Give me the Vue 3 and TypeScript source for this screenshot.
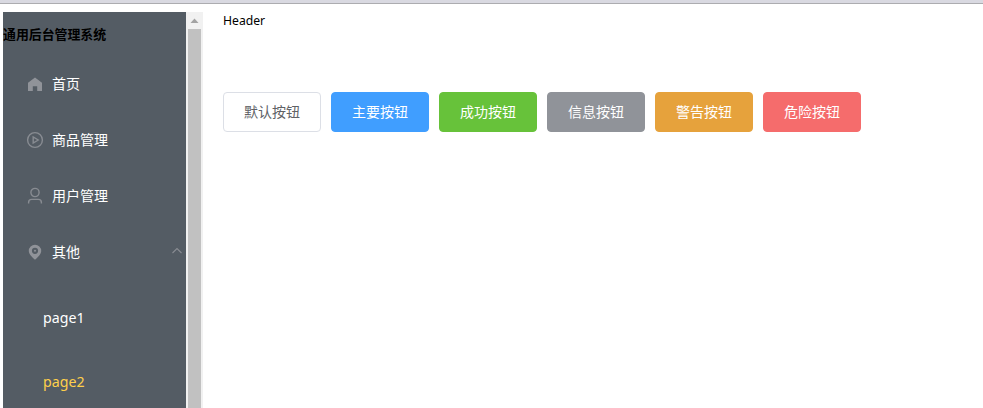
<script setup lang="ts">
interface MenuEntry {
  label: string
  icon: 'home' | 'play' | 'user' | 'pin'
  children?: string[]
}

const menu: MenuEntry[] = [
  { label: '首页', icon: 'home' },
  { label: '商品管理', icon: 'play' },
  { label: '用户管理', icon: 'user' },
  { label: '其他', icon: 'pin', children: ['page1', 'page2'] },
]

const activePage = 'page2'

const buttons: { label: string; kind: string }[] = [
  { label: '默认按钮', kind: 'default' },
  { label: '主要按钮', kind: 'primary' },
  { label: '成功按钮', kind: 'success' },
  { label: '信息按钮', kind: 'info' },
  { label: '警告按钮', kind: 'warning' },
  { label: '危险按钮', kind: 'danger' },
]
</script>

<template>
  <div class="page">
    <div class="window-edge"></div>
    <div class="layout">
      <aside class="sidebar">
        <nav class="menu">
          <h5 class="title">通用后台管理系统</h5>
          <template v-for="item in menu" :key="item.label">
            <div class="menu-item">
              <svg class="icon" viewBox="0 0 18 18">
                <path v-if="item.icon === 'home'" class="solid" d="M9 2.500 16 7.700V16h-4.800v-4.800H6.800V16H2V7.700Z" />
                <g v-else-if="item.icon === 'play'" class="line">
                  <circle cx="9" cy="9" r="7.400" />
                  <path d="M7.200 5.900v6.200L12.200 9Z" />
                </g>
                <g v-else-if="item.icon === 'user'" class="line">
                  <circle cx="9" cy="5.500" r="4.100" />
                  <path d="M2.600 16.600v-1.200a3 3 0 0 1 3-3h6.800a3 3 0 0 1 3 3v1.200" />
                </g>
                <path
                  v-else
                  class="solid"
                  fill-rule="evenodd"
                  d="M9 1.800A6.200 6.200 0 0 1 15.200 8c0 3.500-3.500 6.300-6.200 8.800C6.300 14.300 2.800 11.500 2.800 8A6.200 6.200 0 0 1 9 1.800ZM9 4.700a3.100 3.100 0 1 0 0 6.200a3.100 3.100 0 0 0 0-6.200ZM9 6.800a1 1 0 1 1 0 2a1 1 0 0 1 0-2Z"
                />
              </svg>
              <span>{{ item.label }}</span>
              <svg v-if="item.children" class="arrow" viewBox="0 0 12 12">
                <path d="M1.500 8 6 3.500 10.500 8" />
              </svg>
            </div>
            <ul v-if="item.children" class="submenu">
              <li v-for="child in item.children" :key="child" :class="{ active: child === activePage }">
                {{ child }}
              </li>
            </ul>
          </template>
        </nav>
        <div class="scrollbar">
          <svg class="scroll-up" viewBox="0 0 17 17"><path d="M4.500 11 8.500 6.500 12.500 11Z" /></svg>
          <div class="thumb"></div>
        </div>
      </aside>
      <section class="content">
        <header class="header">Header</header>
        <main class="buttons">
          <button v-for="b in buttons" :key="b.kind" type="button" class="btn" :class="b.kind">
            {{ b.label }}
          </button>
        </main>
      </section>
    </div>
  </div>
</template>

<style>
body {
  margin: 0;
  background: #fff;
}
</style>

<style scoped>
.page {
  height: 408px;
  overflow: hidden;
  font-family: 'Noto Sans', 'Noto Sans CJK SC', sans-serif;
}
.window-edge {
  height: 3px;
  background: #d9d9e1;
  border-bottom: 1px solid #acacb0;
}
.layout {
  display: flex;
  height: 396px;
  padding: 8px 0 0 3px;
}
.sidebar {
  display: flex;
  flex: none;
  width: 200px;
  overflow: hidden;
}
.menu {
  width: 183px;
  background: #545c64;
}
.title {
  margin: 0;
  height: 44px;
  font-size: 12.9px;
  line-height: 44px;
  font-weight: 700;
  color: #000;
}
.menu-item {
  box-sizing: border-box;
  display: flex;
  align-items: center;
  height: 56px;
  padding: 0 3px 0 23px;
  font-size: 14px;
  line-height: 20px;
  color: #fff;
}
.icon {
  width: 18px;
  height: 18px;
  margin-right: 8px;
}
.solid {
  fill: #909399;
}
.line {
  fill: none;
  stroke: #888c92;
  stroke-width: 1.4;
}
.arrow {
  width: 12px;
  height: 12px;
  margin: -3px 0 0 auto;
  fill: none;
  stroke: #888c92;
  stroke-width: 1.1;
}
.submenu {
  margin: 0;
  padding: 6px 0 0 40px;
  list-style: none;
}
.submenu li {
  height: 64px;
  font-size: 14.2px;
  line-height: 64px;
  color: #fff;
}
.submenu li.active {
  color: #ffd04b;
}
.scrollbar {
  display: flex;
  flex-direction: column;
  width: 17px;
  background: #f1f1f1;
}
.scroll-up {
  width: 17px;
  height: 17px;
  fill: #a3a3a3;
}
.thumb {
  flex: 1;
  margin: 0 2px;
  background: #c1c1c1;
}
.content {
  padding-left: 20px;
}
.header {
  height: 80px;
  font-size: 12.2px;
  line-height: 17px;
  color: #000;
}
.buttons {
  display: flex;
  gap: 10px;
}
.btn {
  box-sizing: border-box;
  width: 98px;
  height: 40px;
  padding: 0;
  border: 1px solid transparent;
  border-radius: 4px;
  font-family: inherit;
  font-size: 14px;
  line-height: 14px;
  color: #fff;
}
.default {
  background: #fff;
  border-color: #dcdfe6;
  color: #606266;
}
.primary {
  background: #409eff;
  border-color: #409eff;
}
.success {
  background: #67c23a;
  border-color: #67c23a;
}
.info {
  background: #909399;
  border-color: #909399;
}
.warning {
  background: #e6a23c;
  border-color: #e6a23c;
}
.danger {
  background: #f56c6c;
  border-color: #f56c6c;
}
</style>
